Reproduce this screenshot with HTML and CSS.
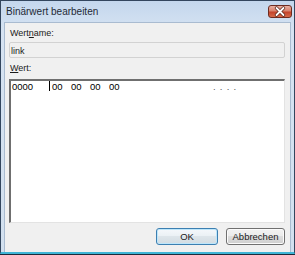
FILE: index.html
```html
<!DOCTYPE html>
<html lang="de">
<head>
    <meta charset="UTF-8">
    <title>Binärwert bearbeiten</title>
    <link rel="stylesheet" href="styles.css">
</head>
<body>
<div class="window">
    <!-- Titelleiste -->
    <div class="titlebar">
        <span class="title">Binärwert bearbeiten</span>
        <span class="close">
            <svg width="22" height="11" viewBox="0 0 22 11">
                <path d="M7.5 2 L14.5 9 M14.5 2 L7.5 9" stroke="#5a2418" stroke-width="3.2" stroke-linecap="round"/>
                <path d="M7.5 2 L14.5 9 M14.5 2 L7.5 9" stroke="#ffffff" stroke-width="1.8" stroke-linecap="round"/>
            </svg>
        </span>
    </div>

    <!-- Inhalt -->
    <div class="client">
        <div class="lbl">Wert<u>n</u>ame:</div>
        <div class="field">link</div>

        <div class="lbl lbl-wert"><u>W</u>ert:</div>
        <div class="hexbox">
            <div class="hexrow">
                <span class="addr">0000</span>
                <span class="bytes">
                    <span class="byte">00</span><span class="byte">00</span><span class="byte">00</span><span class="byte">00</span>
                </span>
                <span class="ascii">....</span>
            </div>
        </div>

        <div class="buttons">
            <button type="button" class="btn btn-default">OK</button>
            <button type="button" class="btn">Abbrechen</button>
        </div>
    </div>
</div>
</body>
</html>
```

FILE: styles.css
```css
body {
    margin: 0;
    background-color: #1c2a3a;
    font-family: "Liberation Sans", Arial, sans-serif;
    font-size: 9px;
    color: #1a1a1a;
}

/* Fenster */
.window {
    width: 295px;
    height: 254px;
    box-sizing: border-box;
    border: 1px solid #33465e;
    border-bottom: 2px solid #3fb5d6;
    background: linear-gradient(#c4d7ed, #d6e3f2 30px, #d2e0ef);
    display: flex;
    flex-direction: column;
}

.titlebar {
    height: 20px;
    display: flex;
    align-items: center;
    justify-content: space-between;
    padding: 0 2px 0 5px;
}

.title {
    font-size: 10px;
    color: #1e2a36;
    padding-top: 1px;
}

.close {
    width: 24px;
    height: 13px;
    box-sizing: border-box;
    border: 1px solid #6e2c20;
    border-radius: 3px;
    background: linear-gradient(#eab0a2, #d9826d 45%, #c4432a 55%, #d66a4a);
    display: flex;
    align-items: center;
    justify-content: center;
    margin-top: 1px;
}

.client {
    flex: 1;
    margin: 1px 3px 0 3px;
    border: 1px solid #a9bbd0;
    border-bottom: none;
    background-color: #f0f0f0;
    padding: 5px 5px 0 4px;
    display: flex;
    flex-direction: column;
}

.lbl {
    line-height: 11px;
    padding-left: 1px;
}

.lbl-wert {
    margin-top: 5px;
}

.field {
    margin-top: 3px;
    height: 16px;
    box-sizing: border-box;
    border: 1px solid #d2d2d2;
    border-radius: 2px;
    background-color: #f0f0f0;
    padding: 3px 0 0 1px;
    line-height: 11px;
}

/* Hex-Editor */
.hexbox {
    margin-top: 5px;
    height: 144px;
    box-sizing: border-box;
    border-top: 2px solid #6f6f6f;
    border-left: 2px solid #6f6f6f;
    border-right: 1px solid #e3e3e3;
    border-bottom: 1px solid #e3e3e3;
    background-color: #ffffff;
    color: #000000;
}

.hexrow {
    display: flex;
    line-height: 11px;
    font-size: 9.5px;
}

.addr {
    width: 37px;
    padding-left: 1px;
    border-right: 1px solid #000000;
    height: 10px;
}

.bytes {
    width: 161px;
    padding-left: 2px;
    display: flex;
}

.byte {
    width: 19px;
}

.ascii {
    letter-spacing: 4.2px;
    color: #555555;
}

/* Schaltflächen */
.buttons {
    margin-top: 5px;
    display: flex;
    justify-content: flex-end;
    gap: 8px;
}

.btn {
    width: 59px;
    height: 17px;
    padding: 0;
    font-family: "Liberation Sans", Arial, sans-serif;
    font-size: 9.5px;
    color: #1a1a1a;
    border: 1px solid #707070;
    border-radius: 3px;
    background: linear-gradient(#f2f2f2, #ebebeb 50%, #dddddd 50%, #cfcfcf);
    box-shadow: inset 0 0 0 1px #fbfbfb;
}

.btn-default {
    width: 62px;
    border-color: #3c7fb1;
    box-shadow: inset 0 0 0 1px #bde6fb;
    background: linear-gradient(#f4f8fb, #eaf0f4 50%, #dde5ea 50%, #d2dce2);
}
```
